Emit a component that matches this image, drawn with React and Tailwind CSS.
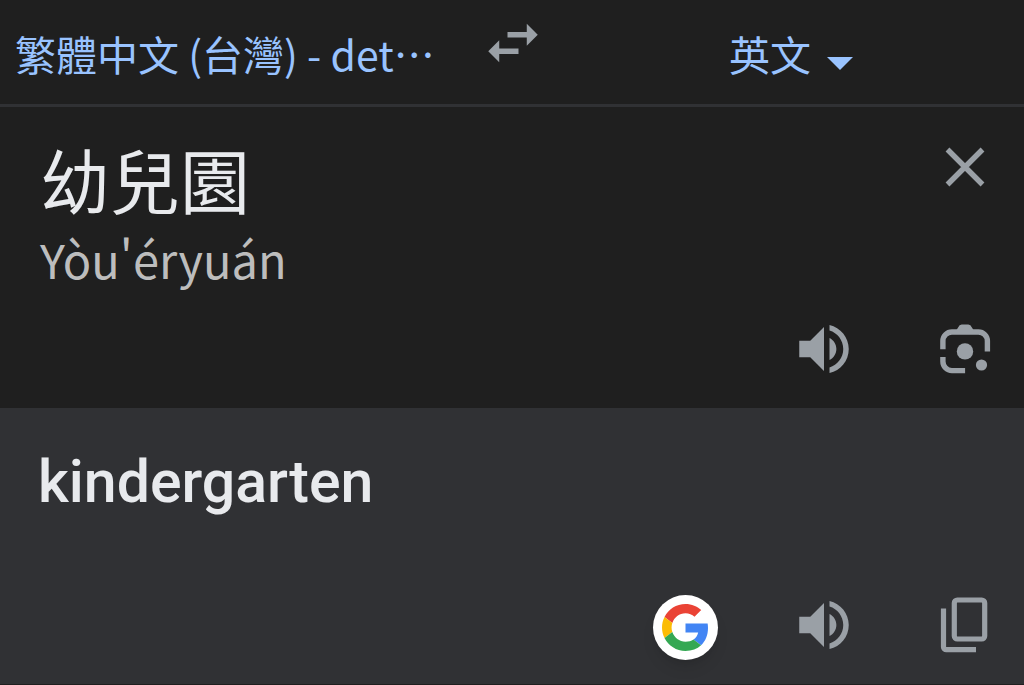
import { useState } from "react";

const SpeakerIcon = () => (
  <svg viewBox="0 0 24 24" className="size-[66px]" fill="currentColor" aria-hidden="true">
    <path d="M3 9v6h4l5 5V4L7 9H3zm13.5 3c0-1.77-1.02-3.29-2.5-4.03v8.05c1.48-.73 2.5-2.25 2.5-4.02zM14 3.23v2.06c2.89.86 5 3.54 5 6.71s-2.11 5.85-5 6.71v2.06c4.01-.91 7-4.49 7-8.77s-2.99-7.86-7-8.77z" />
  </svg>
);

const SwapIcon = () => (
  <svg viewBox="0 0 24 24" className="size-[66px]" fill="currentColor" aria-hidden="true">
    <path d="M6.99 11 3 15l3.99 4v-3H14v-2H6.99v-3zM21 9l-3.99-4v3H10v2h7.01v3L21 9z" />
  </svg>
);

const CloseIcon = () => (
  <svg viewBox="0 0 66 66" className="size-[66px]" fill="none" stroke="currentColor" strokeWidth="5.4" aria-hidden="true">
    <path d="M15.5 15.5l35 35M50.5 15.5l-35 35" />
  </svg>
);

const LensIcon = () => (
  <svg viewBox="0 0 66 66" className="size-[66px]" fill="none" aria-hidden="true">
    <g stroke="currentColor" strokeWidth="5.4">
      <path d="M10.9 33.2V25a9 9 0 0 1 9-9h26.5a9 9 0 0 1 9 9v10.5" />
      <path d="M10.9 41v4.6a9 9 0 0 0 9 9h13.2" />
    </g>
    <g fill="currentColor">
      <path d="M24.5 14l1.6-2.6q1.2-3 3.6-3h6.6q2.4 0 3.6 3l1.6 2.6z" />
      <circle cx="33" cy="35.4" r="8.2" />
      <circle cx="49.5" cy="49" r="5.6" />
    </g>
  </svg>
);

const CopyIcon = () => (
  <svg viewBox="0 0 66 66" className="size-[66px]" fill="none" stroke="currentColor" strokeWidth="5.2" aria-hidden="true">
    <rect x="22.3" y="8" width="30.4" height="39" rx="3" />
    <path d="M11.5 16.6v38.3a2.8 2.8 0 0 0 2.8 2.8H44" />
  </svg>
);

const GoogleLogo = () => (
  <svg viewBox="0 0 48 48" className="size-[47px]" aria-hidden="true">
    <path fill="#EA4335" d="M24 9.5c3.54 0 6.71 1.22 9.21 3.6l6.85-6.85C35.9 2.38 30.47 0 24 0 14.62 0 6.51 5.38 2.56 13.22l7.98 6.19C12.43 13.72 17.74 9.5 24 9.5z" />
    <path fill="#4285F4" d="M46.98 24.55c0-1.57-.15-3.09-.38-4.55H24v9.02h12.94c-.58 2.96-2.26 5.48-4.78 7.18l7.73 6c4.51-4.18 7.09-10.36 7.09-17.65z" />
    <path fill="#FBBC05" d="M10.53 28.59c-.48-1.45-.76-2.99-.76-4.59s.27-3.14.76-4.59l-7.98-6.19C.92 16.46 0 20.12 0 24c0 3.88.92 7.54 2.56 10.78l7.97-6.19z" />
    <path fill="#34A853" d="M24 48c6.48 0 11.93-2.13 15.89-5.81l-7.73-6c-2.15 1.45-4.92 2.3-8.16 2.3-6.26 0-11.57-4.22-13.47-9.91l-7.98 6.19C6.51 42.62 14.62 48 24 48z" />
  </svg>
);

const App = () => {
  const [text, setText] = useState("幼兒園");

  return (
    <div lang="zh-TW" className="flex min-h-screen flex-col bg-[#1f1f1f] font-['Noto_Sans_CJK_TC',sans-serif] text-[#9aa0a6]">
      {/* languages */}
      <header className="grid grid-cols-[1fr_66px_1fr] border-b-3 border-[#303134] pt-[10px] pb-[18px] pl-[2px] text-[41px] text-[#99c3ff]">
        <button type="button" className="mt-[10px] justify-self-start pl-[13px] leading-[66px] whitespace-nowrap">
          繁體中文 (台灣) - det…
        </button>
        <button type="button" aria-label="切換語言" className="self-start text-[#9aa0a6]">
          <SwapIcon />
        </button>
        <div className="mt-[10px] flex items-center justify-center gap-4 pl-3">
          <select aria-label="目標語言" className="appearance-none bg-transparent leading-[66px] outline-none">
            <option>英文</option>
          </select>
          <svg viewBox="0 0 26 13" className="mt-5 w-[26px]" fill="currentColor" aria-hidden="true">
            <path d="M0 0h26L13 13z" />
          </svg>
        </div>
      </header>

      {/* source */}
      <section className="pt-[27px] pr-[26px] pb-[26px] pl-10">
        <div className="flex items-start justify-between">
          <div className="min-w-0 flex-1 pt-[9px]">
            <input
              aria-label="原文"
              value={text}
              onChange={(e) => setText(e.target.value)}
              className="block h-[72px] w-full bg-transparent text-[70px] leading-[72px] text-[#e8eaed] outline-none"
            />
            <p className="mt-[15px] text-[47px] leading-[58px] text-[#bdbdbd]">Yòu'éryuán</p>
          </div>
          <button type="button" aria-label="清除" onClick={() => setText("")}>
            <CloseIcon />
          </button>
        </div>
        <div className="mt-7 flex justify-end gap-[75px]">
          <button type="button" aria-label="聆聽原文">
            <SpeakerIcon />
          </button>
          <button type="button" aria-label="圖片搜尋">
            <LensIcon />
          </button>
        </div>
      </section>

      {/* translation */}
      <section className="flex flex-1 flex-col justify-between border-b border-[#1f1f1f] bg-[#303134] pt-[38px] pr-[26px] pb-6 pl-[38px]">
        <p lang="en" className="font-[Roboto,sans-serif] text-[59px] leading-[72px] font-medium text-[#e8eaed]">
          kindergarten
        </p>
        <div className="flex items-end justify-end">
          <a href="#google" aria-label="Google" className="mr-[73px] flex size-[65px] items-center justify-center rounded-full bg-white shadow-lg">
            <GoogleLogo />
          </a>
          <button type="button" aria-label="聆聽譯文" className="mr-[75px] pb-[2px]">
            <SpeakerIcon />
          </button>
          <button type="button" aria-label="複製" className="pb-[2px]">
            <CopyIcon />
          </button>
        </div>
      </section>
    </div>
  );
};

export default App;
